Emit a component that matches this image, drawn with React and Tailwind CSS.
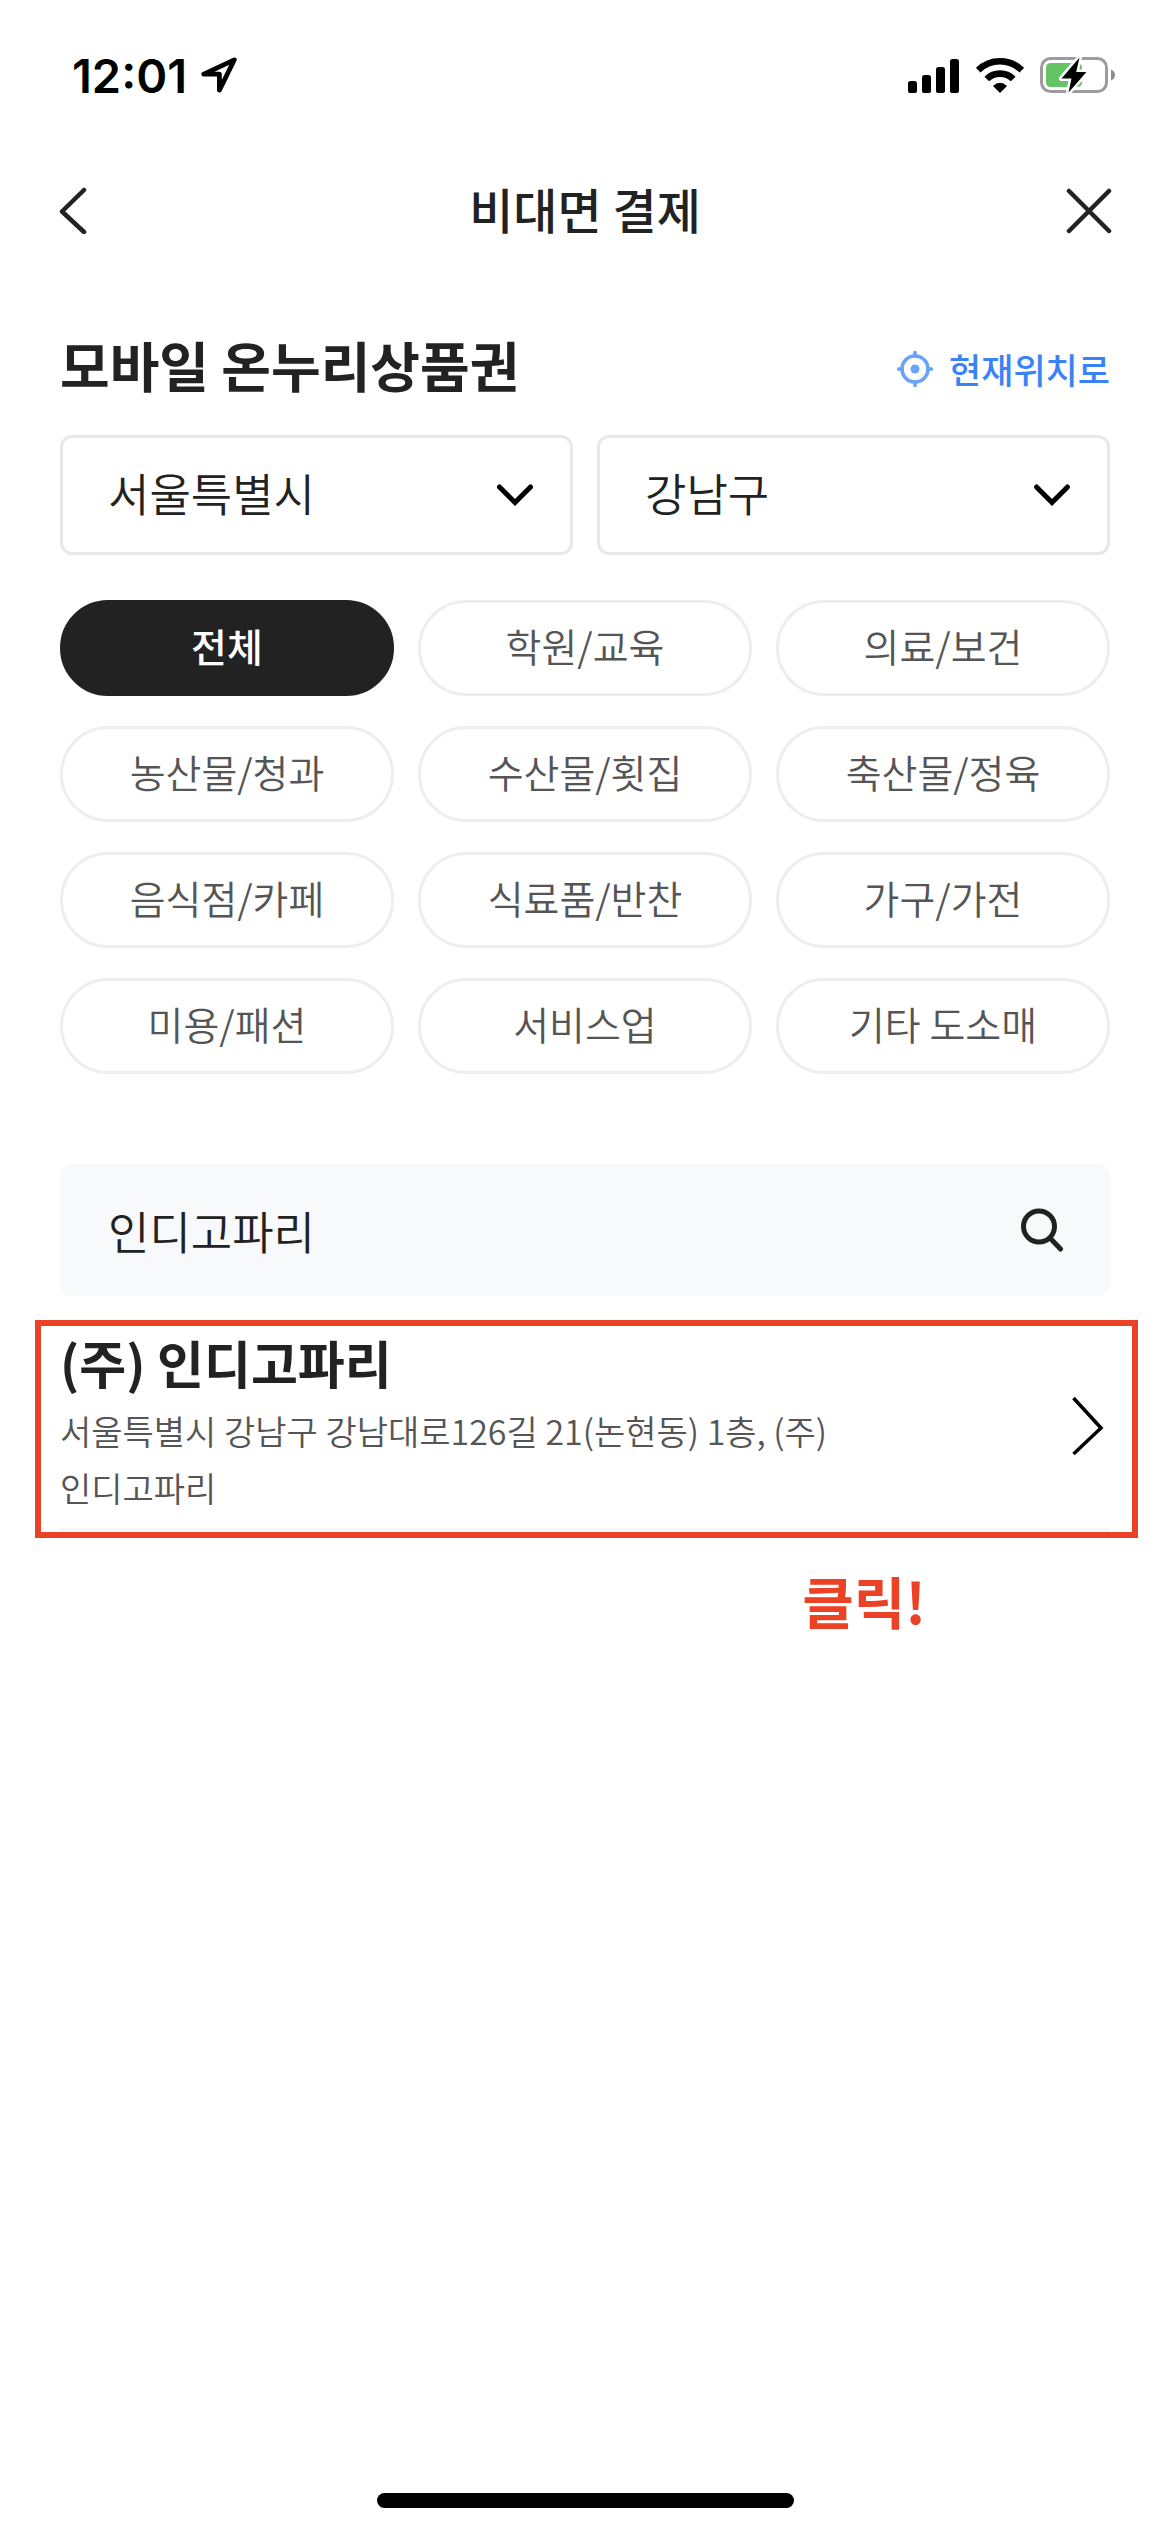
import React, { useState } from 'react';

const CATEGORIES = [
  '전체',
  '학원/교육',
  '의료/보건',
  '농산물/청과',
  '수산물/횟집',
  '축산물/정육',
  '음식점/카페',
  '식료품/반찬',
  '가구/가전',
  '미용/패션',
  '서비스업',
  '기타 도소매',
];

const STORES = [
  {
    id: 1,
    name: '(주) 인디고파리',
    address: '서울특별시 강남구 강남대로126길 21(논현동) 1층, (주) 인디고파리',
  },
];

function StatusBar() {
  return (
    <div className="flex h-[150px] items-center justify-between pl-[72px] pr-[54px]">
      <div className="flex items-center gap-[14px]">
        <span className="font-['Inter',sans-serif] text-[47px] leading-none font-semibold text-black">12:01</span>
        <svg className="size-9" viewBox="0 0 36 36" fill="none" stroke="#000" strokeWidth="4.8" strokeLinejoin="round" strokeLinecap="round">
          <path d="M33.3 2.8 2.8 17.2H18.4V33.2Z" />
        </svg>
      </div>
      <div className="flex items-center gap-4">
        <svg className="h-9 w-[52px]" viewBox="0 0 52 36" fill="#000">
          <rect x="0" y="24" width="9" height="12" rx="2.6" />
          <rect x="14" y="18" width="9" height="18" rx="2.6" />
          <rect x="28" y="10" width="9" height="26" rx="2.6" />
          <rect x="42" y="2" width="9" height="34" rx="2.6" />
        </svg>
        <svg className="h-9 w-12" viewBox="0 0 48 36">
          <g fill="none" stroke="#000" strokeWidth="6.6">
            <path d="M2.2 13.2A31 31 0 0 1 45.8 13.2" />
            <path d="M10.8 22A18.8 18.8 0 0 1 37.2 22" />
          </g>
          <path d="M24 36 17 29Q24 22.4 31 29Z" fill="#000" />
        </svg>
        <svg className="h-[38px] w-[76px]" viewBox="0 0 76 38">
          <rect x="1.5" y="2.5" width="65" height="33" rx="9" fill="none" stroke="#9c9c9c" strokeWidth="3" />
          <path d="M71 13.5Q75 15 75 19T71 24.5Z" fill="#8c8c8c" />
          <rect x="6" y="7" width="36" height="24" rx="4.5" fill="#65c466" />
          <path
            d="M39.5 1.5 21.5 22.5H31.5L28.5 36.5 46.5 16H36.2Z"
            fill="#000"
            stroke="#fff"
            strokeWidth="5"
            strokeLinejoin="round"
            paintOrder="stroke"
          />
        </svg>
      </div>
    </div>
  );
}

function Header() {
  return (
    <header className="flex h-[120px] items-center justify-between px-[57px]">
      <button type="button" aria-label="뒤로" className="flex w-14 justify-start">
        <svg className="h-12 w-8" viewBox="0 0 32 48" fill="none" stroke="#222" strokeWidth="4.5" strokeLinecap="round" strokeLinejoin="round">
          <path d="M27 4 5 25.5 27 46" />
        </svg>
      </button>
      <h1 className="pb-1 text-[48px] leading-none font-medium">비대면 결제</h1>
      <button type="button" aria-label="닫기" className="flex w-14 justify-end">
        <svg className="size-12" viewBox="0 0 48 48" fill="none" stroke="#222" strokeWidth="4.5" strokeLinecap="round">
          <path d="M4 5 44 45M44 5 4 45" />
        </svg>
      </button>
    </header>
  );
}

function RegionSelect({ label, options }) {
  return (
    <div className="relative">
      <select
        aria-label={label}
        className="h-[120px] w-full appearance-none rounded-xl border-[3px] border-[#e8e8e8] bg-white pb-1 pl-[45px] pr-24 text-[45px] font-[350] text-[#222]"
      >
        {options.map((option) => (
          <option key={option}>{option}</option>
        ))}
      </select>
      <svg
        className="pointer-events-none absolute top-[48px] right-[38px] h-6 w-10"
        viewBox="0 0 40 24"
        fill="none"
        stroke="#000"
        strokeWidth="5"
        strokeLinecap="round"
      >
        <path d="M4.5 4 20 19.5 35.5 4" />
      </svg>
    </div>
  );
}

function StoreItem({ store }) {
  return (
    <li className="relative border-b-[3px] border-[#f5f5f5] pt-2 pb-3">
      <a href="#store" className="flex items-center justify-between">
        <div className="w-[800px]">
          <h3 className="text-[51px] leading-[60px] font-bold">{store.name}</h3>
          <p className="mt-[10px] text-[34px] leading-[57px] font-[350] break-keep text-[#555]">{store.address}</p>
        </div>
        <svg className="mt-1 mr-[6px] h-15 w-8" viewBox="0 0 32 60" fill="none" stroke="#000" strokeWidth="3.5">
          <path d="M1.5 2 29 32 1.5 58" />
        </svg>
      </a>
      {/* Highlight frame */}
      <span className="pointer-events-none absolute -top-1 -right-7 -bottom-[10px] -left-[25px] border-[6px] border-[#eb4124]"></span>
    </li>
  );
}

function App() {
  const [category, setCategory] = useState('전체');
  const [keyword, setKeyword] = useState('인디고파리');

  return (
    <div className="flex min-h-screen flex-col bg-white font-['Noto_Sans_CJK_KR',sans-serif] text-[#222]">
      <StatusBar />
      <Header />

      <main className="flex-1 px-15 pt-14">
        <div className="flex items-center justify-between">
          <h2 className="text-[54px] leading-[78px] font-bold">모바일 온누리상품권</h2>
          <button type="button" className="flex items-center gap-4 pt-2 text-[35px] font-medium text-[#3a83f7]">
            <svg className="size-9" viewBox="0 0 36 36" fill="none" stroke="#69a2f9" strokeWidth="3.6" strokeLinecap="round">
              <circle cx="18" cy="18" r="13" />
              <path d="M18 1.5V5M18 31V34.5M1.5 18H5M31 18H34.5" />
              <circle cx="18" cy="18" r="4.5" fill="#69a2f9" stroke="none" />
            </svg>
            현재위치로
          </button>
        </div>

        <div className="mt-[31px] grid grid-cols-2 gap-6">
          <RegionSelect label="시/도" options={['서울특별시']} />
          <RegionSelect label="시/군/구" options={['강남구']} />
        </div>

        {/* Category filter */}
        <div className="mt-[45px] grid grid-cols-3 gap-x-6 gap-y-[30px]">
          {CATEGORIES.map((name) => (
            <button
              key={name}
              type="button"
              onClick={() => setCategory(name)}
              className={`h-24 rounded-full border-[3px] pb-[6px] text-[39px] ${
                category === name
                  ? 'border-[#222] bg-[#222] font-medium text-white'
                  : 'border-[#eee] bg-white font-[350] text-[#555]'
              }`}
            >
              {name}
            </button>
          ))}
        </div>

        <form className="mt-[90px] flex h-[132px] items-center rounded-xl bg-[#f8f9fb] pr-[46px] pl-12" onSubmit={(e) => e.preventDefault()}>
          <input
            type="text"
            aria-label="가맹점 검색"
            value={keyword}
            onChange={(e) => setKeyword(e.target.value)}
            className="h-full min-w-0 flex-1 bg-transparent text-[45px] font-[350] text-[#222] outline-none"
          />
          <button type="submit" aria-label="검색">
            <svg className="size-11" viewBox="0 0 44 44" fill="none" stroke="#222" strokeWidth="5" strokeLinecap="round">
              <circle cx="19" cy="18.5" r="15.5" />
              <path d="M30 30 40.5 41" />
            </svg>
          </button>
        </form>

        <ul className="mt-7">
          {STORES.map((store) => (
            <StoreItem key={store.id} store={store} />
          ))}
        </ul>

        <p className="mt-[30px] pr-[184px] text-right text-[56px] leading-[78px] font-bold text-[#eb4124]">클릭!</p>
      </main>

      {/* Home indicator */}
      <div className="flex justify-center pb-6">
        <div className="h-[15px] w-[417px] rounded-full bg-black"></div>
      </div>
    </div>
  );
}

export default App;
